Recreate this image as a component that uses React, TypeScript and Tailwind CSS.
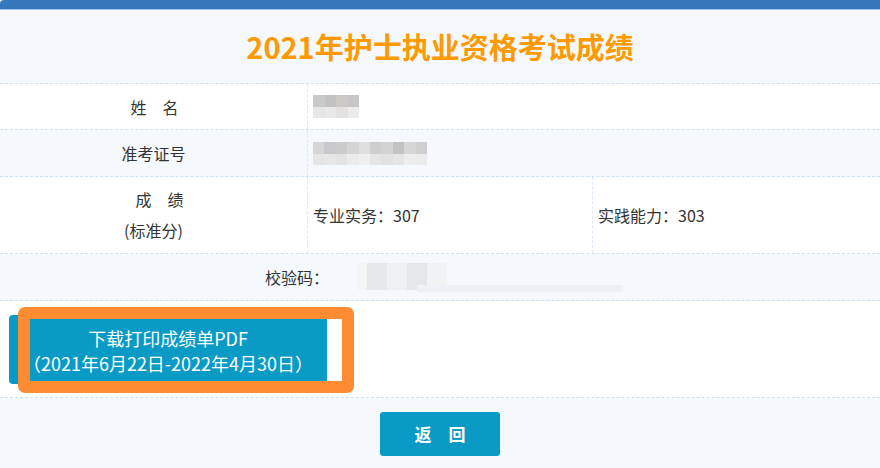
import React from "react";

const nameTop = ["#c9c9c9", "#c2c2c3", "#cbc8c5", "#c6c6c8"];
const nameBot = ["#e6e6e6", "#e9e9e9", "#e3e2e1", "#ebebeb"];
const idTop = ["#d6d6d7", "#c9c9cb", "#cbcbcc", "#d4d4d6", "#dedede", "#cecece", "#d3d3d3", "#c2c2c4", "#d6d6d6", "#cfcfcf"];
const idBot = ["#e5e5e6", "#e7e7e8", "#e3e3e4", "#ebebeb", "#efefef", "#e5e5e5", "#e1e1e2", "#e5e5e6", "#ededed", "#ebebeb"];

function Mosaic({ top, bot, cell }: { top: string[]; bot: string[]; cell: number }) {
  return (
    <div className="flex flex-col">
      <div className="flex">
        {top.map((c, i) => (
          <div key={i} style={{ background: c, width: cell, height: 12 }} />
        ))}
      </div>
      <div className="flex">
        {bot.map((c, i) => (
          <div key={i} style={{ background: c, width: cell, height: 11 }} />
        ))}
      </div>
    </div>
  );
}

export default function App() {
  return (
    <div className="w-[880px] h-[468px] overflow-hidden bg-white text-[#333] font-['Noto_Sans_CJK_SC','Noto_Sans',sans-serif]">
      <div className="h-[9px] bg-[#3577bd] rounded-tl-[4px]" />
      <div className="h-px bg-[#a8c6e9]" />
      <div className="h-[74px] flex items-center justify-center bg-[#f5f9fd] border-b border-dashed border-[#cfe0f3]">
        <h1 className="text-[29px] font-bold text-[#ff9900] leading-none">2021年护士执业资格考试成绩</h1>
      </div>

      <div className="h-[46px] flex bg-white border-b border-dashed border-[#cfe0f3]">
        <div className="w-[308px] flex items-center justify-center border-r border-dashed border-[#dde9f6] text-[16px]">
          <span className="pl-[2px]">姓　名</span>
        </div>
        <div className="flex-1 flex items-center pl-[5px]">
          <Mosaic top={nameTop} bot={nameBot} cell={11.5} />
        </div>
      </div>

      <div className="h-[47px] flex bg-[#f5f9fd] border-b border-dashed border-[#cfe0f3]">
        <div className="w-[308px] flex items-center justify-center border-r border-dashed border-[#dde9f6] text-[16px]">
          <span>准考证号</span>
        </div>
        <div className="flex-1 flex items-center pl-[5px]">
          <Mosaic top={idTop} bot={idBot} cell={11.4} />
        </div>
      </div>

      <div className="h-[77px] flex bg-white border-b border-dashed border-[#cfe0f3]">
        <div className="w-[308px] flex flex-col items-center justify-center border-r border-dashed border-[#dde9f6] text-[16px] leading-[31px]">
          <span className="pl-[12px]">成　绩</span>
          <span>(标准分)</span>
        </div>
        <div className="w-[285px] flex items-center pl-[5px] border-r border-dashed border-[#dde9f6] text-[16px]">
          专业实务：307
        </div>
        <div className="flex-1 flex items-center pl-[5px] text-[16px]">实践能力：303</div>
      </div>

      <div className="h-[47px] flex items-center bg-[#f5f9fd] border-b border-dashed border-[#cfe0f3] pl-[265px] text-[16px]">
        <span>校验码：</span>
        <div className="ml-[28px] relative h-[28px] w-[266px]">
          <div className="flex h-[27px]">
            <div className="w-[10px] bg-[#f3f4f6]" />
            <div className="w-[20px] bg-[#e6e7e9]" />
            <div className="w-[20px] bg-[#eff0f2]" />
            <div className="w-[20px] bg-[#e5e6e8]" />
            <div className="w-[20px] bg-[#f1f2f4]" />
          </div>
          <div className="absolute left-[60px] top-[22px] h-[7px] w-[206px] bg-[#eef1f5]" />
        </div>
      </div>

      <div className="relative h-[97px] bg-white border-b border-dashed border-[#cfe0f3] pt-[14px] pl-[9px]">
        <button className="w-[318px] h-[69px] rounded-[4px] bg-[#0a9ac6] text-white text-[18px] leading-[25px] flex flex-col items-center justify-center pt-[2px]">
          <span>下载打印成绩单PDF</span>
          <span>（2021年6月22日-2022年4月30日）</span>
        </button>
        <div className="absolute left-[18px] top-[6px] w-[336px] h-[86px] border-[12px] border-[#ff8b33] rounded-[7px]" />
      </div>

      <div className="h-[70px] bg-[#f5f9fd] flex justify-center pt-[14px]">
        <button className="w-[120px] h-[44px] rounded-[3px] bg-[#0a9ac6] text-white text-[17px] font-bold">
          返　回
        </button>
      </div>
    </div>
  );
}
